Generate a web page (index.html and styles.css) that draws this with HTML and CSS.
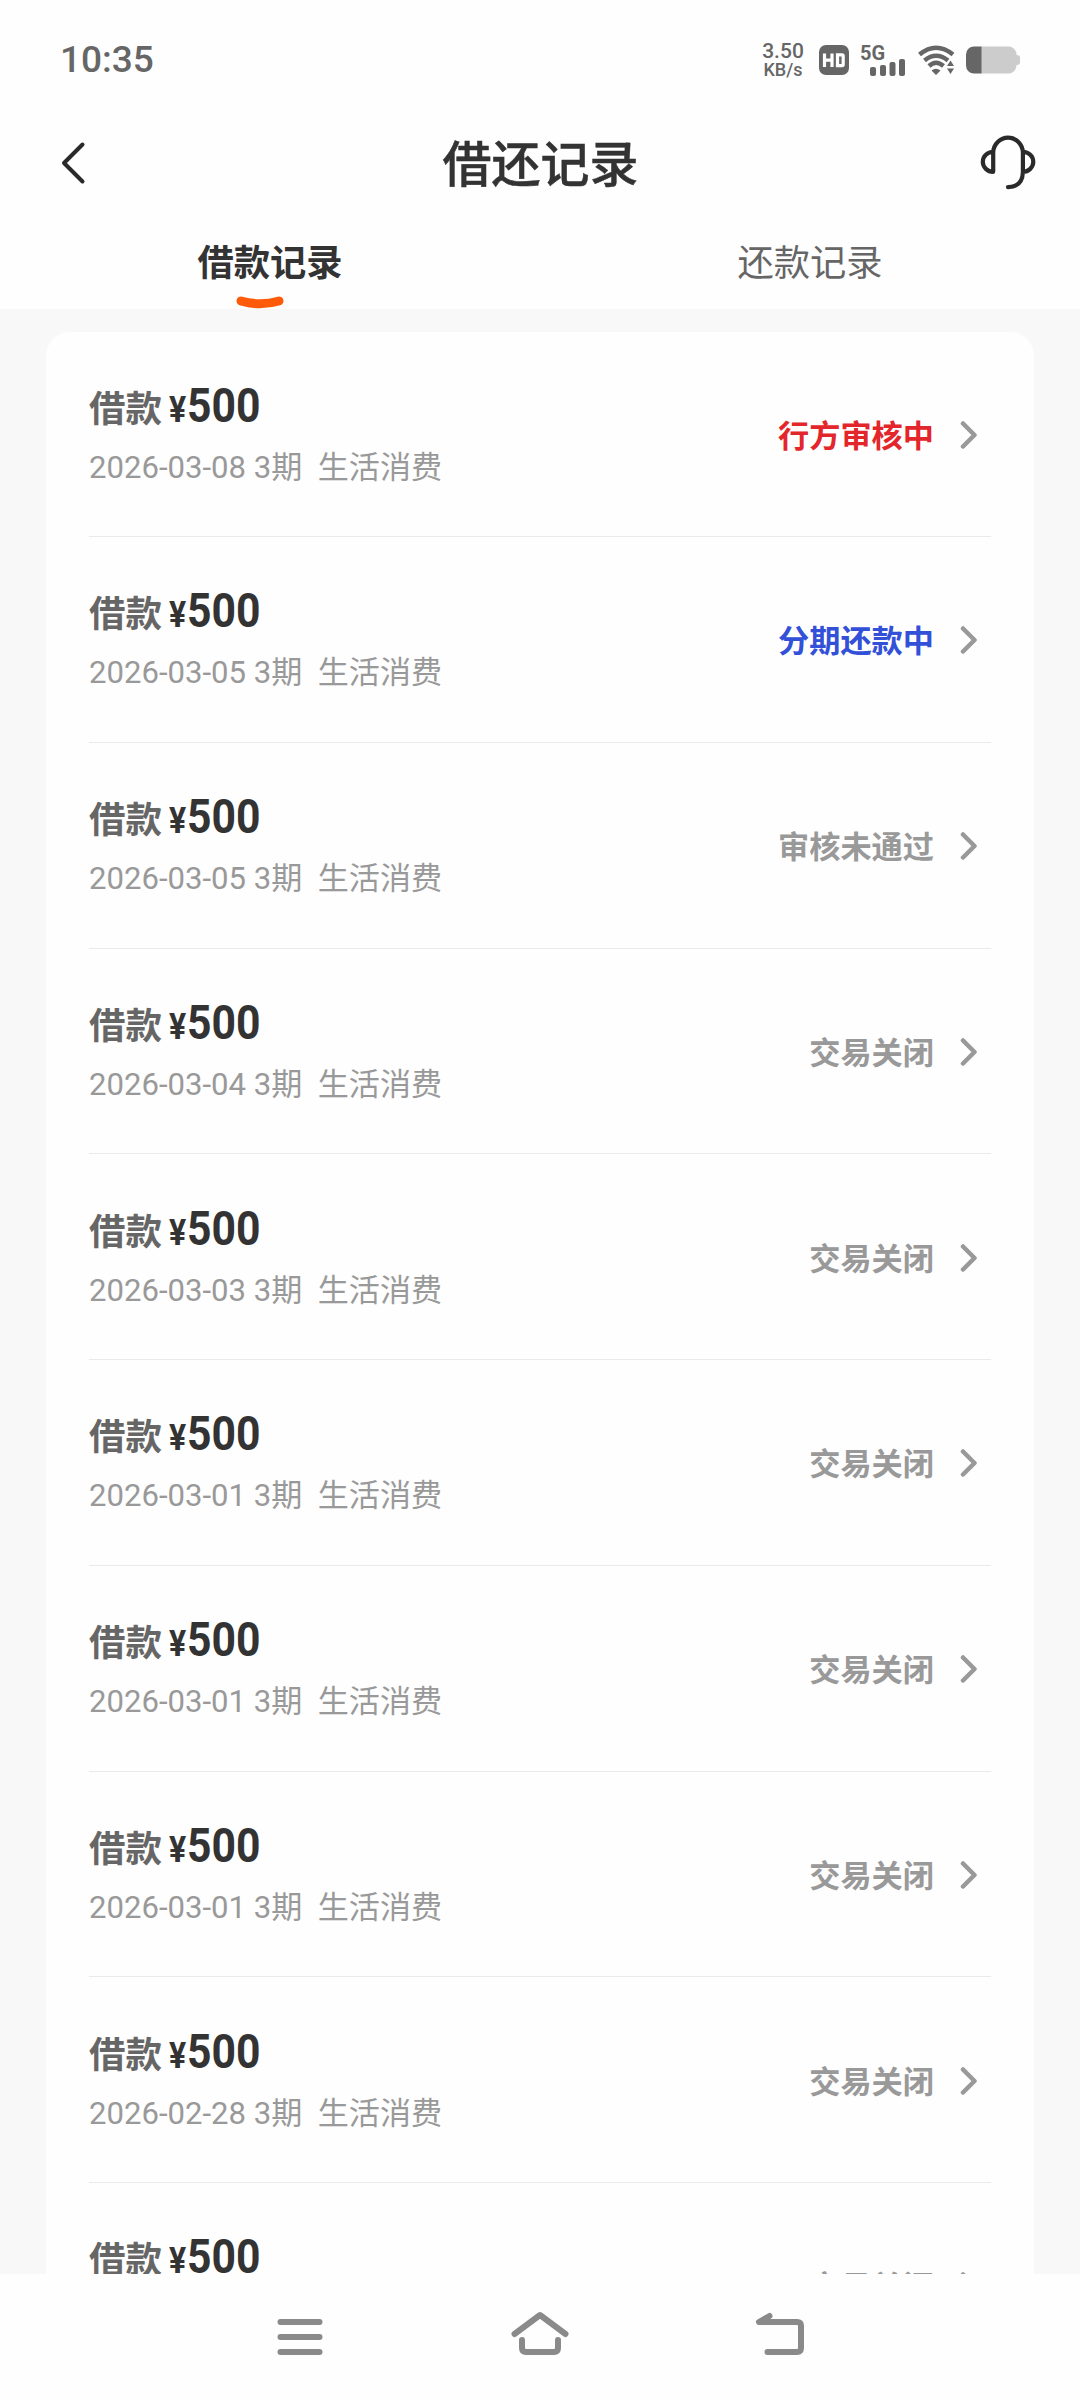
FILE: index.html
```html
<!DOCTYPE html>
<html lang="zh-CN">
<head>
<meta charset="utf-8">
<title>借还记录</title>
<link rel="stylesheet" href="styles.css">
</head>
<body>
<div class="screen">
  <div class="statusbar">
    <span class="clock">10:35</span>
    <div class="indicators">
      <div class="speed"><span class="speed-num">3.50</span><span class="speed-unit">KB/s</span></div>
      <svg class="hd" width="30" height="30" viewBox="0 0 30 30"><rect width="30" height="30" rx="7" fill="#666"/><path d="M5.500 8.500v13.500M13 8.500v13.500M5.500 15.200h7.500M18.500 9.800v10.900h4.500q1.200 0 1.200-1.200v-8.500q0-1.200-1.200-1.200z" fill="none" stroke="#fff" stroke-width="3.200"/></svg>
      <div class="signal"><span class="net">5G</span>
        <svg class="bars" width="36" height="17" viewBox="0 0 36 17" fill="#666"><rect x="0" y="8" width="6" height="9" rx="2"/><rect x="10" y="6" width="6" height="11" rx="2"/><rect x="19.500" y="3" width="6" height="14" rx="2"/><rect x="29" y="0" width="6" height="17" rx="2"/></svg>
      </div>
      <svg class="wifi" width="37" height="30" viewBox="0 0 37 30"><g fill="none" stroke="#666" stroke-width="4.500"><path d="M1.500 9.500Q18 -4 35 9.500"/><path d="M6.500 15.500Q18 6 30 15.500"/><path d="M11 21Q18 14.500 25.500 21"/></g><path d="M13.500 25.500q4.500-3.500 9 0l-4.500 4.500zM29 21l3.500-5.500L36 21zM29 23.500l3.500 5.500 3.500-5.500z" fill="#666"/></svg>
      <svg class="battery" width="54" height="28" viewBox="0 0 54 28"><path d="M15 .5h28a8 8 0 0 1 7.500 8.500q3.500 0 3.500 2.500v5q0 2.500-3.500 2.500a8 8 0 0 1-7.500 8.500H15z" fill="#ccc"/><path d="M15.500 .5v27H8a8 8 0 0 1-8-8v-11a8 8 0 0 1 8-8z" fill="#666"/></svg>
    </div>
  </div>
  <header class="header">
    <svg class="back" width="26" height="44" viewBox="0 0 26 44"><path d="M22.500 3.500L4 22l18.500 18.500" fill="none" stroke="#2a2a2a" stroke-width="4" stroke-linecap="round" stroke-linejoin="round"/></svg>
    <h1 class="title">借还记录</h1>
    <svg class="service" width="56" height="56" viewBox="0 0 56 56"><path d="M13.200 36.800V17a14.900 15.700 0 0 1 29.700 0V37q-.5 15-14.900 15.200M13.200 16.800a10.400 10 0 0 0 0 20M42.900 16.800a10.400 10 0 0 1 0 20" fill="none" stroke="#2a2a2a" stroke-width="4.200" stroke-linecap="round" stroke-linejoin="round"/></svg>
  </header>
  <nav class="tabs">
    <div class="tab active">借款记录<svg class="mark" width="48" height="14" viewBox="0 0 48 14"><path d="M5 6Q24 11.500 43 6" fill="none" stroke="#ff5a0a" stroke-width="9" stroke-linecap="round"/></svg></div>
    <div class="tab">还款记录</div>
  </nav>
  <main class="content">
    <div class="card" id="list"></div>
  </main>
  <footer class="navbar">
    <svg width="52" height="52" viewBox="0 0 52 52"><path d="M6.500 11h39M6.500 26h39M6.500 41h39"/></svg>
    <svg width="60" height="52" viewBox="0 0 60 52"><path d="M4.500 23L30 4l25.500 19M12 29v8q0 4 4 4h28q4 0 4-4v-8"/></svg>
    <svg width="52" height="52" viewBox="0 0 52 52"><path d="M15.500 5L5 11h38q4 0 4 4v22q0 4-4 4H13.500"/></svg>
  </footer>
</div>
<script src="records.js"></script>
</body>
</html>
```
FILE: records.js
```js
const records = [
  ['2026-03-08', '行方审核中', 'reviewing'],
  ['2026-03-05', '分期还款中', 'repaying'],
  ['2026-03-05', '审核未通过', ''],
  ['2026-03-04', '交易关闭', ''],
  ['2026-03-03', '交易关闭', ''],
  ['2026-03-01', '交易关闭', ''],
  ['2026-03-01', '交易关闭', ''],
  ['2026-03-01', '交易关闭', ''],
  ['2026-02-28', '交易关闭', ''],
  ['2026-02-28', '交易关闭', '']
];
document.getElementById('list').innerHTML = records.map(([date, status, kind]) => `
  <div class="row">
    <div class="info">
      <div class="amount"><span class="label">借款</span><span class="money"><span class="yen">¥</span>500</span></div>
      <div class="meta">${date} 3期&nbsp; 生活消费</div>
    </div>
    <span class="status ${kind}">${status}</span>
    <svg class="arrow" width="18" height="30" viewBox="0 0 18 30"><path d="M3 3.500L14.500 15 3 26.500" fill="none" stroke="#999" stroke-width="4.500" stroke-linecap="round" stroke-linejoin="round"/></svg>
  </div>`).join('');
```
FILE: styles.css
```css
* { box-sizing: border-box; }
body { margin: 0; background: #fff; font-family: Roboto, "Noto Sans CJK SC", sans-serif; }
svg { display: block; flex: none; }
.screen { width: 1080px; height: 2400px; display: flex; flex-direction: column; overflow: hidden; background: #fefefe; }
.statusbar { height: 120px; flex: none; padding: 0 60px 0 60px; display: flex; justify-content: space-between; align-items: center; color: #666; }
.clock { font-size: 37px; font-weight: 500; line-height: 44px; }
.indicators { display: flex; align-items: center; }
.speed { width: 42px; margin-right: 15px; display: flex; flex-direction: column; align-items: center; font-weight: 500; }
.speed-num { font-size: 21px; line-height: 19px; }
.speed-unit { font-size: 18px; line-height: 18px; }
.hd { margin-right: 12px; }
.signal { width: 45px; height: 30px; margin-right: 12px; position: relative; }
.net { position: absolute; left: -1px; top: -2px; font-size: 20px; line-height: 20px; font-weight: 700; }
.bars { position: absolute; left: 9px; top: 14px; }
.wifi { margin-right: 11px; }
.header { height: 86px; flex: none; padding: 0 44px 0 60px; display: grid; grid-template-columns: 56px 1fr 56px; align-items: center; }
.title { margin: 0 0 0 -15px; padding-top: 5px; text-align: center; font-size: 49px; line-height: 60px; font-weight: 500; color: #333; -webkit-text-stroke: .5px #333; }
.tabs { height: 103px; flex: none; display: flex; }
.tab { flex: 1; position: relative; padding-top: 34px; text-align: center; font-size: 36.300px; line-height: 48px; color: #666; }
.active { font-weight: 700; color: #333; }
.mark { position: absolute; left: 236px; bottom: 0; }
.content { flex: 1; min-height: 0; overflow: hidden; background: #f8f8f8; padding: 23px 46px 0; }
.card { background: #fefefe; border-radius: 24px; padding: 0 43px; }
.row { height: 205.750px; padding-right: 13px; border-bottom: 1px solid #eaeaea; display: flex; align-items: center; }
.row:first-child { height: 205px; }
.info { flex: 1; }
.amount { height: 56px; display: flex; align-items: baseline; line-height: 56px; }
.label { font-size: 36.500px; font-weight: 700; color: #666; margin-right: 7px; }
.money { font-size: 48px; font-weight: 700; color: #333; transform: scaleX(.89); transform-origin: left; }
.yen { font-size: 36px; margin-right: 1px; }
.meta { font-size: 31.100px; line-height: 44px; color: #999; margin-top: 12px; }
.status { font-size: 31.200px; font-weight: 700; color: #999; margin-right: 26px; padding-bottom: 1px; }
.arrow { margin-top: 2px; }
.reviewing { color: #e3262b; }
.repaying { color: #3350d8; }
.navbar { height: 126px; flex: none; display: flex; justify-content: center; gap: 184px; padding-top: 37px; }
.navbar svg { fill: none; stroke: #8a8a8a; stroke-width: 6; stroke-linecap: round; stroke-linejoin: round; }
```
